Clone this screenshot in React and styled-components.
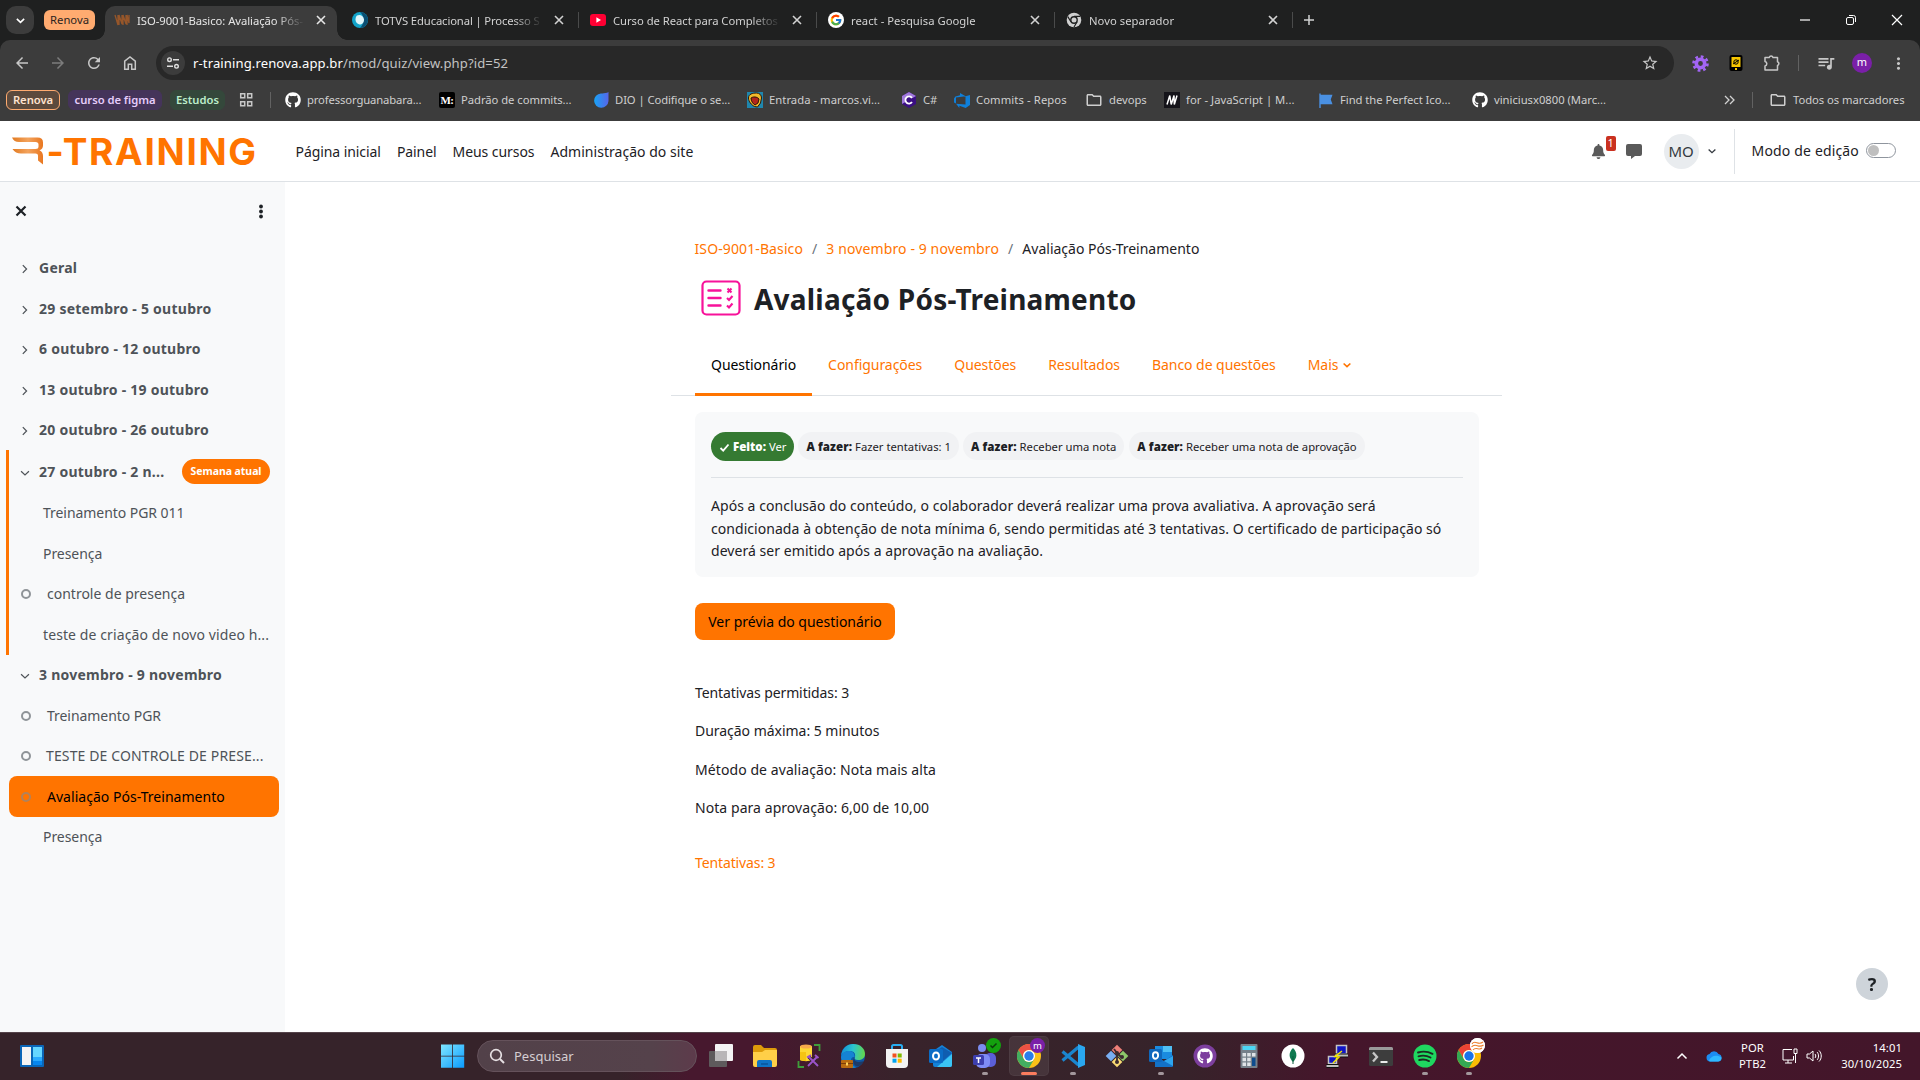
import React from "react";
import styled, { createGlobalStyle, css } from "styled-components";
import { FaGithub, FaBell } from "react-icons/fa6";
import { FcGoogle } from "react-icons/fc";
import {
  MdArrowBack, MdArrowForward, MdRefresh, MdOutlineExtension, MdStarBorder,
  MdQueueMusic, MdMoreVert, MdOutlineFolder, MdSettings,
} from "react-icons/md";

const orange = "#ff7400";
const font = `"Noto Sans", "Open Sans", sans-serif`;

const Global = createGlobalStyle`
  * { box-sizing: border-box; }
  body { margin: 0; background: #fff; font-family: ${font}; overflow: hidden; }
  svg { display: block; flex: none; }
`;

const Screen = styled.div`
  width: 1920px;
  height: 1080px;
  display: flex;
  flex-direction: column;
  overflow: hidden;
`;

const Icon = ({ w = 16, h, vb, children }) => (
  <svg width={w} height={h || w} viewBox={vb || `0 0 ${w} ${h || w}`} fill="none">
    {children}
  </svg>
);

/* ---------- browser: tab strip ---------- */

const TabStrip = styled.header`
  height: 40px;
  flex: none;
  display: flex;
  align-items: center;
  background: #1f2020;
  padding-left: 6px;
  color: #dfdfdf;
  font-size: 11.25px;
`;
const TabSearch = styled.button`
  width: 28px;
  height: 28px;
  border: 0;
  border-radius: 10px;
  padding: 0;
  background: #3c3c3c;
  display: grid;
  place-items: center;
`;
const GroupChip = styled.span`
  width: 51px;
  height: 20px;
  margin-left: 10px;
  border-radius: 6px;
  background: #ffab70;
  color: #2b2320;
  line-height: 19px;
  text-align: center;
`;
const Tabs = styled.nav`
  display: flex;
  margin-left: 7px;
`;
const Tab = styled.div`
  position: relative;
  width: 238px;
  height: 40px;
  display: flex;
  align-items: center;
  padding: 0 13px 0 11px;
  border-left: 1px solid transparent;
  border-image: ${(p) => (p.$line ? "linear-gradient(transparent 12px, #4a4b4b 12px, #4a4b4b 28px, transparent 28px) 1" : "none")};
`;
const ActiveTab = styled(Tab)`
  &::before {
    content: "";
    position: absolute;
    inset: 6px 3px 0 2px;
    border-radius: 10px 10px 0 0;
    background: #3c3c3c;
  }
  &::after {
    content: "";
    position: absolute;
    left: -8px;
    right: -7px;
    bottom: 0;
    height: 10px;
    background:
      radial-gradient(circle at 0 0, transparent 9.5px, #3c3c3c 10px) left / 10px 10px no-repeat,
      radial-gradient(circle at 100% 0, transparent 9.5px, #3c3c3c 10px) right / 10px 10px no-repeat;
  }
  > * { position: relative; z-index: 1; }
`;
const Favicon = styled.span`
  width: 16px;
  height: 16px;
  flex: none;
  display: grid;
  place-items: center;
`;
const TabTitle = styled.span`
  flex: 1;
  margin: 1px 10px 0 7px;
  white-space: nowrap;
  letter-spacing: ${(p) => p.$ls || 0}px;
  line-height: 20px;
  color: ${(p) => (p.$active ? "#e6e6e6" : "#d2d2d2")};
  mask-image: linear-gradient(90deg, #000 calc(100% - 30px), transparent);
`;
const NewTab = styled.span`
  height: 16px;
  padding-left: 10px;
  border-left: 1px solid #4a4b4b;
  display: flex;
  align-items: center;
`;
const WindowButtons = styled.div`
  margin-left: auto;
  display: flex;
  gap: 34px;
  padding-right: 17px;
`;

const Cross = ({ s = 12, c = "#d2d2d2", sw = 1.6, e = 2 }) => (
  <Icon w={s}><path d={`M${e} ${e}L${s - e} ${s - e}M${s - e} ${e}L${e} ${s - e}`} stroke={c} strokeWidth={sw} /></Icon>
);

const VmmIcon = () => (
  <Icon><path d="M1 3l3 10V3M5 13V3l3 9V3M9 13V3l3 9V3M13 13V3l2 8V3" stroke="#96562a" strokeWidth="1.3" /></Icon>
);
const TotvsIcon = () => (
  <Icon>
    <circle cx="8" cy="8" r="8" fill="#12a3c9" />
    <path d="M8 0a8 8 0 0 1 0 16c4-3 5-12 0-16z" fill="#0a4f73" />
    <path d="M5 3.500c3-1.500 6.500 0 7 4 .2 3-2 5-4.500 5C5 12 3.500 10 3.500 7.500c0-2 .5-3 1.500-4z" fill="#dff6fb" />
  </Icon>
);
const YoutubeIcon = () => (
  <Icon><rect y="2" width="16" height="12" rx="3" fill="#ff0033" /><path d="M6.4 5.3v5.4L11 8z" fill="#fff" /></Icon>
);
const GoogleIcon = () => (
  <Icon>
    <circle cx="8" cy="8" r="8" fill="#fff" />
    <g transform="translate(1.6 1.6)"><FcGoogle size={12.8} /></g>
  </Icon>
);
const ChromeGreyIcon = () => (
  <Icon>
    <circle cx="8" cy="8" r="7.300" fill="#d0d0d0" />
    <circle cx="8" cy="8" r="3.9" fill="#1f2020" />
    <circle cx="8" cy="8" r="2.5" fill="#d0d0d0" />
    <path d="M8 4.4h6.2M4.9 9.8L1.8 4.6M11.1 9.8L8 15" stroke="#1f2020" strokeWidth="1.2" />
  </Icon>
);

/* ---------- browser: toolbar ---------- */

const Toolbar = styled.div`
  height: 46px;
  flex: none;
  display: flex;
  align-items: center;
  background: #1f2020;
`;
const ToolbarInner = styled.div`
  width: 100%;
  height: 46px;
  display: flex;
  align-items: center;
  padding: 0 13px;
  background: #3c3c3c;
  border-radius: 10px 10px 0 0;
  color: #c7c7c7;
`;
const NavButtons = styled.div`
  display: flex;
  gap: 18px;
  width: 143px;
`;
const AddressBar = styled.div`
  width: 1518px;
  height: 34px;
  border-radius: 17px;
  background: #282828;
  display: flex;
  align-items: center;
  padding: 0 15px 0 5px;
`;
const SiteInfo = styled.span`
  width: 24px;
  height: 24px;
  border-radius: 50%;
  background: #3c3c3c;
  display: grid;
  place-items: center;
`;
const Url = styled.span`
  flex: 1;
  margin-left: 8px;
  font-size: 13.1px;
  letter-spacing: 0.1px;
  line-height: 20px;
  color: #c2c2c2;
  b { font-weight: 400; color: #fff; }
`;
const Extensions = styled.div`
  display: flex;
  align-items: center;
  margin-left: 17px;
`;
const Slot = styled.span`
  width: ${(p) => p.$w}px;
  display: flex;
  justify-content: center;
`;
const Rule = styled.span`
  width: 1px;
  height: 16px;
  flex: none;
  margin: ${(p) => p.$m || "0"};
  background: #626262;
`;
const Profile = styled.span`
  width: 20px;
  height: 20px;
  border-radius: 50%;
  background: #7a1fa8;
  color: #fff;
  font-size: 11px;
  line-height: 18px;
  text-align: center;
`;

/* ---------- browser: bookmarks ---------- */

const Bookmarks = styled.div`
  height: 35px;
  flex: none;
  display: flex;
  align-items: center;
  padding: 0 0 7px 6px;
  background: #3c3c3c;
  font-size: 11.25px;
  letter-spacing: -0.04px;
  color: #cfcfcf;
  white-space: nowrap;
`;
const Group = styled.span`
  width: ${(p) => p.$w}px;
  height: 20px;
  margin-right: 8px;
  border-radius: 6px;
  border: 1px solid ${(p) => p.$border || p.$bg};
  background: ${(p) => p.$bg};
  color: ${(p) => p.$fg};
  font-weight: 600;
  line-height: 17px;
  text-align: center;
`;
const Bookmark = styled.span`
  width: ${(p) => p.$w}px;
  flex: none;
  display: flex;
  align-items: center;
  gap: 6px;
  line-height: 18px;
  letter-spacing: ${(p) => p.$ls ?? -0.04}px;
`;

const MediumIcon = styled.span`
  width: 16px;
  height: 16px;
  border-radius: 2px;
  background: #000;
  color: #fff;
  font: 700 11px/16px "Liberation Serif", serif;
  letter-spacing: -0.6px;
  text-align: center;
  overflow: hidden;
`;
const MdnIcon = () => (
  <Icon><rect width="16" height="16" fill="#15141a" /><path d="M3 12.500L5.800 3.500l1.400 9L10 3.500l.300 9L13 3.500" stroke="#fff" strokeWidth="1.500" /></Icon>
);
const DioIcon = () => (
  <Icon>
    <defs><linearGradient id="dio" x1="0" x2="1"><stop stopColor="#18a3f5" /><stop offset="1" stopColor="#5765e8" /></linearGradient></defs>
    <path d="M15.5 0v9a7.2 7.2 0 1 1-7.6-7.6c2.8.2 5.500-.2 7.6-1.400z" fill="url(#dio)" />
  </Icon>
);
const EntradaIcon = () => (
  <Icon>
    <rect width="16" height="16" fill="#1f86ad" />
    <path d="M1.500 6c0-4 4-5 8-5 3 0 5 2 5 5l-1 5-3 4-3-.500c-3-1.500-6-5-6-8.500z" fill="#f2bb2b" stroke="#2a1408" />
    <path d="M4 6c2-1.500 6-1.500 8 1l-1 4-3 2c-2-1-4-4-4-7z" fill="#b3261b" stroke="#2a1408" />
  </Icon>
);
const CsharpIcon = () => (
  <Icon>
    <path d="M8 0l7 4v8l-7 4-7-4V4z" fill="#3b0f83" />
    <path d="M8 0l7 4-14 8V4z" fill="#a179dc" />
    <circle cx="8" cy="8" r="4.200" fill="#3b0f83" />
    <path d="M11 6a3.600 3.600 0 1 0 0 4" stroke="#fff" strokeWidth="1.800" />
  </Icon>
);
const DevopsIcon = () => (
  <Icon><path d="M16 3v10l-4.300 3-6.300-2.200V16L2 11.700l9.500.700V4.200zM11.700 4.200L6 1v2.200L1.400 4.600 0 6.400v4.200l2 .900V5.500z" fill="#0f7fd9" /></Icon>
);
const FlagIcon = () => (
  <Icon><path d="M2 1.500v14.500M2.500 3.500h11l-1.500 4 1.500 4H2.500z" fill="#4a90e2" stroke="#4a90e2" strokeWidth="1.400" /></Icon>
);

/* ---------- page: top navigation ---------- */

const SiteNav = styled.header`
  height: 61px;
  flex: none;
  display: flex;
  align-items: center;
  padding: 0 24px 0 12px;
  border-bottom: 1px solid #dee2e6;
  background: #fff;
  font-size: 14px;
  color: #1d2125;
`;
const Logo = styled.div`
  width: 283.5px;
  display: flex;
  align-items: center;
  color: ${orange};
  font: 700 37px/40px Inter, sans-serif;
  letter-spacing: 1.7px;
  white-space: nowrap;
  padding-top: 2px;
  span { margin-left: 2.5px; }
  svg { position: relative; top: -1px; }
`;
const NavLinks = styled.nav`
  display: flex;
  gap: 16px;
  padding-top: 2px;
  line-height: 22px;
  span:nth-child(-n + 3) { letter-spacing: -0.07px; }
  span { letter-spacing: 0.03px; }
`;
const UserTools = styled.div`
  margin-left: auto;
  display: flex;
  align-items: center;
  height: 60px;
`;
const Bell = styled.span`
  position: relative;
  width: 35px;
  color: #5a5a5a;
`;
const Count = styled.b`
  position: absolute;
  left: 15px;
  top: -8px;
  width: 10px;
  height: 15px;
  border-radius: 2px;
  background: #ca3120;
  color: #fff;
  font-weight: 400;
  font-size: 11px;
  line-height: 14px;
  text-align: center;
`;
const Avatar = styled.span`
  width: 35px;
  height: 35px;
  margin: 0 7px 0 22px;
  border-radius: 50%;
  background: #e9ecef;
  color: #343a40;
  font-size: 15px;
  line-height: 34px;
  text-align: center;
`;
const EditMode = styled.label`
  height: 45px;
  margin-left: 16px;
  padding-left: 17px;
  border-left: 1px solid #dee2e6;
  display: flex;
  align-items: center;
  gap: 7px;
  letter-spacing: 0.16px;
  line-height: 22px;
`;
const Switch = styled.span`
  width: 30px;
  height: 15px;
  margin-top: -1px;
  border: 1px solid #8f959e;
  border-radius: 8px;
  padding: 1px;
  &::before {
    content: "";
    display: block;
    width: 11px;
    height: 11px;
    border-radius: 50%;
    background: #bfbfbf;
  }
`;

/* ---------- page: course index ---------- */

const Page = styled.div`
  flex: 1;
  display: flex;
  min-height: 0;
  background: #fff;
`;
const Drawer = styled.aside`
  width: 285px;
  flex: none;
  background: #f8f9fa;
  color: #4e5358;
  font-size: 14px;
`;
const DrawerHead = styled.div`
  height: 65.5px;
  padding: 22px 19px 0 14px;
  display: flex;
  justify-content: space-between;
  align-items: flex-start;
`;
const Week = styled.section`
  border-left: 3px solid ${(p) => (p.$current ? orange : "transparent")};
  margin-left: 6px;
`;
const WeekHead = styled.div`
  height: ${(p) => (p.$tall ? 42.5 : 40.5)}px;
  display: flex;
  align-items: center;
  padding: 0.6px 15px 0 9px;
  font-weight: 700;
  letter-spacing: 0.25px;
  line-height: 22px;
  white-space: nowrap;
  svg { margin-right: 7px; position: relative; top: 1px; }
`;
const WeekBadge = styled.span`
  width: 88px;
  height: 25px;
  flex: none;
  margin-left: auto;
  border-radius: 13px;
  background: ${orange};
  color: #fff;
  font-size: 10.5px;
  letter-spacing: -0.05px;
  line-height: 24px;
  text-align: center;
`;
const Activity = styled.a`
  height: 40.5px;
  width: 270px;
  display: flex;
  align-items: center;
  padding: 1.4px 0 0 ${(p) => p.$pad ?? 34}px;
  letter-spacing: ${(p) => p.$ls ?? 0}px;
  line-height: 22px;
  white-space: nowrap;
  ${(p) => p.$on && css`
    background: ${orange};
    color: #000;
    border-radius: 8px;
  `}
`;
const Ring = styled.i`
  width: 10px;
  height: 10px;
  flex: none;
  margin-right: ${(p) => p.$gap || 16}px;
  border: 2px solid ${(p) => (p.$on ? "#b0825c" : "#8f9498")};
  border-radius: 50%;
`;

const chevrons = {
  right: "M5.500 3.500l4.300 4.500-4.300 4.500",
  down: "M3.500 6l4.500 4.200L12.500 6",
};
const Chevron = ({ dir = "right", size = 14, c = "#4e5358", sw = 1.4 }) => (
  <Icon w={size} vb="0 0 16 16"><path d={chevrons[dir]} stroke={c} strokeWidth={sw} /></Icon>
);

/* ---------- page: main ---------- */

const Main = styled.main`
  flex: 1;
  padding: 0 0 0 386px;
  font-size: 14px;
  color: #1d2125;
`;
const Column = styled.div`
  width: 832px;
  padding: 56px 24px 0;
`;
const Crumbs = styled.div`
  display: flex;
  gap: 9px;
  height: 22px;
  line-height: 22px;
  margin-left: -0.5px;
  letter-spacing: 0.11px;
  a { color: ${orange}; }
  i { font-style: normal; color: #6a737b; }
  span { letter-spacing: 0; }
`;
const Heading = styled.div`
  display: flex;
  align-items: center;
  gap: 13px;
  height: 50px;
  margin: 13px 0 0 5px;
  h1 { margin: 1px 0 0 -1px; font-size: 28px; letter-spacing: 0.22px; line-height: 40px; color: #1d2125; }
`;
const TabBar = styled.nav`
  display: flex;
  height: 64px;
  margin: 9px -23px 0 -24px;
  padding: 0 24px;
  border-bottom: 1px solid #dee2e6;
`;
const PageTab = styled.a`
  height: 64px;
  display: flex;
  align-items: center;
  gap: 3px;
  padding: 5px 16px 0;
  line-height: 22px;
  letter-spacing: -0.05px;
  white-space: nowrap;
  color: ${(p) => (p.$on ? "#000" : orange)};
  border-bottom: 3px solid ${(p) => (p.$on ? orange : "transparent")};
`;
const Card = styled.section`
  width: 784px;
  height: 165px;
  margin-top: 16px;
  padding: 20px 16px;
  border-radius: 8px;
  background: #f8f9fa;
`;
const Conditions = styled.div`
  display: flex;
  gap: 4px;
  height: 46px;
  border-bottom: 1px solid #dee2e6;
`;
const Pill = styled.span`
  display: flex;
  align-items: center;
  height: ${(p) => (p.$done ? 29 : 28)}px;
  margin-left: ${(p) => p.$ml || 0}px;
  padding: 0 8px;
  border-radius: 15px;
  font-size: 11.25px;
  white-space: pre;
  background: ${(p) => (p.$done ? "#357a32" : "#f1f2f4")};
  color: ${(p) => (p.$done ? "#fff" : "#1d2125")};
  b { font-size: 11.5px; font-weight: 900; letter-spacing: ${(p) => (p.$done ? 0 : 0.1)}px; }
  svg { margin-right: 3px; position: relative; top: 1px; }
`;
const Description = styled.p`
  margin: 17px 0 0;
  line-height: 22.5px;
  letter-spacing: 0.05px;
  white-space: nowrap;
`;
const Primary = styled.button`
  display: block;
  width: 200px;
  height: 37px;
  margin: 26px 0 42px;
  padding: 0;
  border: 0;
  border-radius: 8px;
  background: ${orange};
  color: #000;
  font: 14px/35px ${font};
`;
const Fact = styled.p`
  margin: 0 0 16px;
  line-height: 22.3px;
  letter-spacing: ${(p) => p.$ls || 0}px;
  ${(p) => p.$link && css`color: ${orange}; margin-top: 33px;`}
`;
const Help = styled.button`
  position: fixed;
  right: 32px;
  bottom: 80px;
  width: 32px;
  height: 32px;
  border: 0;
  padding: 0;
  border-radius: 50%;
  background: #ced4da;
  color: #1d2125;
  font: 700 18px/32px ${font};
`;

/* ---------- taskbar ---------- */

const Taskbar = styled.footer`
  height: 48px;
  flex: none;
  display: flex;
  align-items: center;
  box-shadow: inset 0 1px 0 #55434a;
  padding: 0 18px 0 20px;
  background: linear-gradient(90deg, #36232a 0, #36232a 620px, #47182e 690px, #47182e 760px, #38232b 900px, #36232a 1180px, #45162b 1330px, #43162a 100%);
  color: #fff;
`;
const Search = styled.div`
  width: 220px;
  height: 32px;
  margin: 0 2px 0 12px;
  border: 1px solid #65525b;
  border-radius: 16px;
  background: linear-gradient(90deg, #524149, #55424b 80%, #5d3b4b);
  display: flex;
  align-items: center;
  gap: 9px;
  padding: 0 0 1px 11px;
  font-size: 13px;
  line-height: 20px;
  color: #d5ced2;
`;
const StartArea = styled.div`
  margin-left: 397px;
  display: flex;
  align-items: center;
`;
const App48 = styled.span`
  width: 44px;
  height: 48px;
  display: flex;
  flex-direction: column;
  align-items: center;
  position: relative;
  padding-top: 12px;
`;
const ActiveApp = styled(App48)`
  &::before {
    content: "";
    position: absolute;
    inset: 4px 2px 4px 2px;
    border-radius: 5px;
    background: rgba(255, 255, 255, 0.08);
    border: 1px solid rgba(255, 255, 255, 0.04);
  }
`;
const Running = styled.i`
  position: absolute;
  bottom: 5px;
  width: ${(p) => (p.$on ? 16 : 6)}px;
  height: 3px;
  border-radius: 2px;
  background: ${(p) => (p.$on ? "#fb7c5e" : "#a3979c")};
`;
const AppBadge = styled.span`
  position: absolute;
  left: 23px;
  top: 6px;
  width: 15px;
  height: 15px;
  border-radius: 50%;
  background: ${(p) => p.$bg};
  color: #fff;
  font-size: 9.5px;
  line-height: 13px;
  display: flex;
  justify-content: center;
  align-items: center;
`;
const Tray = styled.div`
  margin-left: auto;
  display: flex;
  align-items: center;
  font-size: 11.25px;
  line-height: 16px;
`;
const TwoLines = styled.div`
  width: ${(p) => p.$w}px;
  text-align: ${(p) => p.$align};
  padding-bottom: 1px;
  letter-spacing: 0.1px;
`;

const I24 = (p) => <Icon w={24} {...p} />;

const WidgetIcon = () => (
  <I24>
    <rect y="1" width="24" height="22" rx="1" fill="#0a66b8" />
    <rect x="2" y="3" width="9" height="18" fill="#f4f4f4" />
    <rect x="13" y="3" width="9" height="10" fill="#66d6ff" />
    <rect x="13" y="13" width="9" height="4" fill="#2aaaff" />
    <rect x="13" y="17" width="9" height="4" fill="#0786ef" />
  </I24>
);
const StartIcon = () => (
  <I24>
    <defs><linearGradient id="win" x1="0" y1="0" x2="1" y2="1"><stop stopColor="#7fe6ff" /><stop offset="1" stopColor="#0a9bff" /></linearGradient></defs>
    <path d="M0 .500h11.200v11.200H0zM12 .500h11.200v11.200H12zM0 12.500h11.200v11.200H0zM12 12.500h11.200v11.200H12z" fill="url(#win)" />
  </I24>
);
const TaskViewIcon = () => (
  <I24>
    <rect x="6" y="0" width="18" height="17" rx="1" fill="#f4f3f4" />
    <rect x="0" y="7" width="18" height="16" rx="1" fill="#5e5a5c" />
    <rect x="6" y="7" width="12" height="10" fill="#b9b6b8" />
  </I24>
);
const ExplorerIcon = () => (
  <I24>
    <path d="M0 3a2 2 0 0 1 2-2h6l3 3h11a2 2 0 0 1 2 2v4H0z" fill="#dd9b0a" />
    <path d="M0 8h9l3-2h12v15a2 2 0 0 1-2 2H2a2 2 0 0 1-2-2z" fill="#ffcf48" />
    <path d="M4 23v-5a2 2 0 0 1 2-2h11a2 2 0 0 1 2 2v5z" fill="#0f74c6" />
    <path d="M8 20h7" stroke="#0a559b" strokeWidth="1.500" />
  </I24>
);
const SsmsIcon = () => (
  <I24>
    <path d="M3 2h12v14c-2 1.500-10 1.500-12 0z" fill="#fdd835" />
    <path d="M3 8h6v9c-3 0-5-.500-6-1z" fill="#f5c413" />
    <ellipse cx="9" cy="2.500" rx="6" ry="2" fill="#f7a94a" />
    <path d="M17 1h5.500v6M1.500 17v6H7" stroke="#3f9e3a" strokeWidth="1.800" />
    <path d="M11 22l9-9M12 13l9 9" stroke="#36232a" strokeWidth="3.500" />
    <path d="M11 22l9-9M12 13l9 9M10 13.500l4-2.500M18 11l3.500 3" stroke="#9c52c9" strokeWidth="1.900" />
  </I24>
);
const EdgeIcon = () => (
  <I24>
    <defs><linearGradient id="edge" x1="0" y1=".3" x2="1" y2=".4"><stop stopColor="#128fd8" /><stop offset=".5" stopColor="#2bc4cf" /><stop offset="1" stopColor="#63d64c" /></linearGradient></defs>
    <circle cx="12" cy="12" r="12" fill="#0d57a4" />
    <path d="M0 12C1 4 6 0 12 0c8 0 12 5 12 10 0 4-3 6-7 6-3 0-4-1-3-3 1-4-2-6-5-6-4 0-8 2-9 5z" fill="url(#edge)" />
    <path d="M0 13c1-4 4-6 8-6 3 0 6 2 5.500 6C9 12 8 20 15 23.500 7 26 0 20 0 13z" fill="#1583d3" />
    <path d="M13.500 13c-1 3 1 5 5 5 2 0 4-1 4.500-1-1 3-4 5-6.500 5.500-4-1-5.500-5-3-9.500z" fill="#2e1e2b" opacity=".5" />
    <rect y="16" width="12" height="8" rx="1" fill="#b96a10" />
    <path d="M0 19.500h12" stroke="#7c3f08" />
    <rect x="5" y="18.500" width="2" height="3" fill="#ffd15a" />
  </I24>
);
const StoreIcon = () => (
  <I24>
    <path d="M7 6V2.500A1.500 1.500 0 0 1 8.500 1h7A1.500 1.500 0 0 1 17 2.500V6" stroke="#28aef2" strokeWidth="2" />
    <path d="M1 5h22v15a4 4 0 0 1-4 4H5a4 4 0 0 1-4-4z" fill="#f3f3f3" />
    <path d="M7.500 9.500h4v4h-4z" fill="#f25022" /><path d="M12.700 9.500h4v4h-4z" fill="#7fba00" />
    <path d="M7.500 14.700h4v4h-4z" fill="#00a4ef" /><path d="M12.700 14.700h4v4h-4z" fill="#ffb900" />
  </I24>
);
const OutlookNewIcon = () => (
  <I24>
    <path d="M4 7l9-6 10 7v13a2 2 0 0 1-2 2H6a2 2 0 0 1-2-2z" fill="#1482d8" />
    <path d="M7 7l6-4 10 6-9 8-7-4z" fill="#0f5db0" />
    <path d="M23 10v11a2 2 0 0 1-2 2H8z" fill="#3bc5f5" />
    <rect x="0" y="5" width="14" height="14" rx="1.500" fill="#0b6cc6" />
    <ellipse cx="7" cy="12" rx="3" ry="3.500" stroke="#fff" strokeWidth="2" />
  </I24>
);
const OutlookIcon = () => (
  <I24>
    <path d="M6 2h16a1 1 0 0 1 1 1v12H6z" fill="#1a8be0" />
    <path d="M14 2h9v6h-9z" fill="#4fc0f5" />
    <path d="M6 12l9 5 9-6v11a1 1 0 0 1-1 1H6z" fill="#1372c7" />
    <path d="M15 17l9-5v10z" fill="#2da5ee" />
    <rect y="5" width="13" height="13" rx="1.500" fill="#0f68bd" />
    <ellipse cx="6.500" cy="11.500" rx="2.600" ry="3.200" stroke="#fff" strokeWidth="1.900" />
  </I24>
);
const TeamsIcon = () => (
  <I24>
    <circle cx="9" cy="4" r="4" fill="#7b8df0" />
    <rect x="12" y="9" width="11" height="14" rx="5" fill="#5b5fd8" />
    <rect x="3" y="10" width="14" height="14" rx="5" fill="#7f8cf5" />
    <rect x="0" y="11" width="11" height="10" rx="1.500" fill="#3d3fae" />
    <path d="M3 14h5M5.500 14v5" stroke="#fff" strokeWidth="1.500" />
  </I24>
);
const ChromeIcon = () => (
  <I24>
    <circle cx="12" cy="12" r="12" fill="#fbbc05" />
    <path d="M1.600 6A12 12 0 0 1 22.400 6H12a6 6 0 0 0-5.200 9z" fill="#ea4335" />
    <path d="M1.600 6A12 12 0 0 0 12 24l5.200-9a6 6 0 0 1-10.400 0z" fill="#34a853" />
    <circle cx="12" cy="12" r="6" fill="#fff" />
    <circle cx="12" cy="12" r="4.700" fill="#1a73e8" />
  </I24>
);
const CodeIcon = () => (
  <I24>
    <path d="M1.500 7.500L17.500 21M1.500 16.500L17.500 3" stroke="#1a86cf" strokeWidth="3.200" />
    <path d="M17 0l7 3v18l-7 3z" fill="#2aa7f0" />
  </I24>
);
const GitIcon = () => (
  <I24>
    <g transform="rotate(45 12 12)">
      <rect x="4" y="4" width="7.500" height="7.500" fill="#ef7f78" />
      <rect x="12.500" y="4" width="7.500" height="7.500" fill="#8dc96a" />
      <rect x="4" y="12.500" width="7.500" height="7.500" fill="#79aef2" />
      <rect x="12.500" y="12.500" width="7.500" height="7.500" fill="#fbdb74" />
    </g>
    <path d="M9 5l3 4v9M12 9l4 4" stroke="#3b2b30" strokeWidth="1.800" />
    <circle cx="12" cy="9" r="2" fill="#3b2b30" /><circle cx="12" cy="18" r="2" fill="#3b2b30" /><circle cx="17" cy="13" r="2" fill="#3b2b30" />
  </I24>
);
const GithubDesktopIcon = () => (
  <I24>
    <circle cx="12" cy="12" r="11.500" fill="#7d3f9e" />
    <g transform="translate(4 4)"><FaGithub size={16} color="#fff" /></g>
  </I24>
);
const CalculatorIcon = () => (
  <I24>
    <rect x="3.500" width="17" height="24" rx="1" fill="#75808a" />
    <rect x="5.500" y="2" width="13" height="4" fill="#4cd6f5" />
    <path d="M5.500 9h3.500v3.500H5.500zM10.200 9h3.500v3.500h-3.500zM15 9h3.500v3.500H15zM5.500 13.700h3.500v3.500H5.500zM10.200 13.700h3.500v3.500h-3.500zM5.500 18.500h3.500V22H5.500zM10.200 18.500h3.500V22h-3.500z" fill="#dfe3e7" />
    <rect x="15" y="13.700" width="3.500" height="8.300" fill="#0e4c8e" />
  </I24>
);
const MongoIcon = () => (
  <I24>
    <circle cx="12" cy="12" r="11.500" fill="#fff" />
    <path d="M12 4c5 5 4 10 0 14-4-4-5-9 0-14z" fill="#0f7a50" />
    <path d="M12 12v8" stroke="#0b5c3c" />
  </I24>
);
const PuttyIcon = () => (
  <I24>
    <rect x="11.500" y="1.500" width="10" height="8.500" fill="#1016c4" stroke="#c4c4c4" strokeWidth="1.500" />
    <rect x="3.500" y="12.500" width="8" height="7" fill="#1016c4" stroke="#c4c4c4" strokeWidth="1.500" />
    <path d="M10 11.500h13M1.500 22h12" stroke="#111" strokeWidth="4" />
    <path d="M10 11.500h13M1.500 22h12" stroke="#bdbdbd" strokeWidth="2.200" />
    <path d="M17 7l-7 5.500 4 .500-6 6" stroke="#f4e800" strokeWidth="1.500" />
  </I24>
);
const TerminalIcon = () => (
  <I24>
    <rect y="3" width="24" height="19" rx="1.500" fill="#3d3d3d" />
    <path d="M0 6V4.500A1.500 1.500 0 0 1 1.500 3h21A1.500 1.500 0 0 1 24 4.500V6z" fill="#9a9a9a" />
    <path d="M4 8.500l4 4.500-4 4.500" stroke="#c6c6c6" strokeWidth="2.300" />
    <path d="M11.500 18h7" stroke="#fff" strokeWidth="1.800" />
  </I24>
);
const SpotifyIcon = () => (
  <I24>
    <circle cx="12" cy="12" r="11.500" fill="#1fd760" />
    <path d="M5 8.500c5-1.500 10-1 14.500 1.300M5.500 12.300c4-1.100 8.500-.700 12 1.200M6.200 16c3.500-.800 7-.500 9.800 1.100" stroke="#1c2b22" strokeWidth="1.900" strokeLinecap="round" />
  </I24>
);
const WaveBadge = () => (
  <Icon w={15}>
    <circle cx="7.500" cy="7.500" r="7.500" fill="#fff" />
    <path d="M2 6c3-5 6 2 11-2M1.500 9c4-5 7 2 12-2M3 12c3-4 6 1 9-2" stroke="#ee7d2b" strokeWidth="1.100" />
  </Icon>
);
const BrandMark = () => (
  <Icon w={32} h={28}>
    <defs>
      <linearGradient id="mark" gradientUnits="userSpaceOnUse" x1="0" y1="0" x2="32" y2="0">
        <stop stopColor="#e27a20" /><stop offset=".5" stopColor="#f3a35d" /><stop offset="1" stopColor="#e8741c" />
      </linearGradient>
    </defs>
    <path d="M0 .500H25.500Q31 .500 31 5.500v3Q31 12 27.500 13.200 31 15 31 19v8.500l-5-4V18.500Q26 16.500 23.500 16.500H9Q3.500 16.500.500 12H23.500Q26.500 12 26.500 9.500V7.500Q26.500 5 23.500 5H7Q2 5 0 .500z" fill="url(#mark)" />
  </Icon>
);

const bookmarks = [
  ["professorguanabara...", 154, <FaGithub size={16} color="#fff" />, -0.12],
  ["Padrão de commits...", 154, <MediumIcon>M:</MediumIcon>],
  ["DIO | Codifique o se...", 154, <DioIcon />, -0.08],
  ["Entrada - marcos.vi...", 154, <EntradaIcon />, 0.04],
  ["C#", 53, <CsharpIcon />],
  ["Commits - Repos", 131, <DevopsIcon />, 0.1],
  ["devops", 79, <MdOutlineFolder size={18} />],
  ["for - JavaScript | M...", 154, <MdnIcon />, 0.04],
  ["Find the Perfect Ico...", 154, <FlagIcon />],
  ["viniciusx0800 (Marc...", 250, <FaGithub size={16} color="#fff" />, -0.02],
];

const tabs = [
  ["TOTVS Educacional | Processo S", -0.12, <TotvsIcon />],
  ["Curso de React para Completos", -0.03, <YoutubeIcon />, true],
  ["react - Pesquisa Google", 0.03, <GoogleIcon />, true],
  ["Novo separador", 0.03, <ChromeGreyIcon />, true],
];

const apps = [
  { icon: <TaskViewIcon /> },
  { icon: <ExplorerIcon /> },
  { icon: <SsmsIcon /> },
  { icon: <EdgeIcon /> },
  { icon: <StoreIcon /> },
  { icon: <OutlookNewIcon /> },
  { icon: <TeamsIcon />, run: true, badge: <AppBadge $bg="#13a10e"><Icon w={9}><path d="M1.500 4.500l2 2 4-4" stroke="#0b3d0a" strokeWidth="1.500" /></Icon></AppBadge> },
  { icon: <ChromeIcon />, run: true, active: true, badge: <AppBadge $bg="#7a1fa8">m</AppBadge> },
  { icon: <CodeIcon />, run: true },
  { icon: <GitIcon /> },
  { icon: <OutlookIcon />, run: true },
  { icon: <GithubDesktopIcon /> },
  { icon: <CalculatorIcon /> },
  { icon: <MongoIcon /> },
  { icon: <PuttyIcon /> },
  { icon: <TerminalIcon /> },
  { icon: <SpotifyIcon />, run: true },
  { icon: <ChromeIcon />, run: true, badge: <AppBadge $bg="#fff"><WaveBadge /></AppBadge> },
];

const pastWeeks = ["Geral", "29 setembro - 5 outubro", "6 outubro - 12 outubro", "13 outubro - 19 outubro", "20 outubro - 26 outubro"];

const Browser = () => (
  <>
    <TabStrip>
      <TabSearch><Chevron dir="down" c="#fff" sw={2} size={13} /></TabSearch>
      <GroupChip>Renova</GroupChip>
      <Tabs>
        <ActiveTab>
          <Favicon><VmmIcon /></Favicon>
          <TabTitle $active $ls={-0.04}>ISO-9001-Basico: Avaliação Pós-</TabTitle>
          <Cross c="#e6e6e6" />
        </ActiveTab>
        {tabs.map(([title, ls, icon, line]) => (
          <Tab key={title} $line={line}>
            <Favicon>{icon}</Favicon>
            <TabTitle $ls={ls}>{title}</TabTitle>
            <Cross />
          </Tab>
        ))}
      </Tabs>
      <NewTab><Icon w={12}><path d="M6 1v10M1 6h10" stroke="#d2d2d2" strokeWidth="1.500" /></Icon></NewTab>
      <WindowButtons>
        <Icon w={12}><path d="M1 6h10" stroke="#fff" strokeWidth="1.200" /></Icon>
        <Icon w={12}><rect x="1.500" y="3.500" width="7" height="7" rx="1.500" stroke="#fff" /><path d="M4 1.500h4.500a2 2 0 0 1 2 2V8" stroke="#fff" /></Icon>
        <Cross c="#fff" sw={1.2} e={1} />
      </WindowButtons>
    </TabStrip>
    <Toolbar>
      <ToolbarInner>
        <NavButtons>
          <MdArrowBack size={18} />
          <MdArrowForward size={18} color="#7c7c7c" />
          <MdRefresh size={18} />
          <Icon w={18}><path d="M3.700 7.200L9 3l5.300 4.200v8.100h-3.600v-5H7.300v5H3.700z" stroke="#c7c7c7" strokeWidth="1.500" /></Icon>
        </NavButtons>
        <AddressBar>
          <SiteInfo>
            <Icon w={14}><circle cx="3.500" cy="3.700" r="1.800" stroke="#e0e0e0" strokeWidth="1.400" /><circle cx="10.500" cy="10.300" r="1.800" stroke="#e0e0e0" strokeWidth="1.400" /><path d="M7 3.700h6M1 10.300h6" stroke="#e0e0e0" strokeWidth="1.500" /></Icon>
          </SiteInfo>
          <Url><b>r-training.renova.app.br</b>/mod/quiz/view.php?id=52</Url>
          <MdStarBorder size={18} />
        </AddressBar>
        <Extensions>
          <Slot $w={18}>
            <Icon w={17} vb="0 0 17 17">
              <circle cx="8.500" cy="8.500" r="4.200" stroke="#a365f5" strokeWidth="3.600" />
              <circle cx="8.500" cy="8.500" r="7" stroke="#a365f5" strokeWidth="2.600" strokeDasharray="2.750 2.750" />
            </Icon>
          </Slot>
          <Slot $w={54}><Icon w={14} h={16}><rect x=".5" width="13" height="16" rx="2" fill="#000" /><rect x="2.500" y="2" width="9" height="10" fill="#f7c600" /><circle cx="7" cy="7" r="2.200" stroke="#000" /><path d="M4 9l6-4" stroke="#000" /><rect x="6" y="13" width="2" height="2" fill="#f7c600" /></Icon></Slot>
          <Slot $w={18}>
            <Icon w={18}><path d="M2 3.500h4.200a2 2 0 0 1 3.800 0h4.500v4.200a2 2 0 0 1 0 3.800v4.500H2v-4a2.300 2.300 0 0 0 0-4.500z" stroke="#c7c7c7" strokeWidth="1.500" strokeLinejoin="round" /></Icon>
          </Slot>
          <Rule $m="0 17px 0 17px" />
          <Slot $w={19}><MdQueueMusic size={20} /></Slot>
          <Slot $w={54}><Profile>m</Profile></Slot>
          <Slot $w={18}><MdMoreVert size={19} /></Slot>
        </Extensions>
      </ToolbarInner>
    </Toolbar>
    <Bookmarks>
      <Group $w={54} $bg="#5c4a3d" $border="#ffab70" $fg="#ffe3cf">Renova</Group>
      <Group $w={94} $bg="#45345a" $fg="#e6cdfb">curso de figma</Group>
      <Group $w={55} $bg="#34483b" $fg="#bdeecb">Estudos</Group>
      <Icon w={20}><path d="M7.700 3.700h4v4h-4zM14.700 3.700h4v4h-4zM7.700 11.700h4v4h-4zM14.700 11.700h4v4h-4z" stroke="#c7c7c7" strokeWidth="1.500" /></Icon>
      <Rule $m="0 14px 0 17px" />
      {bookmarks.map(([name, w, icon, ls]) => <Bookmark key={name} $w={w} $ls={ls}>{icon}{name}</Bookmark>)}
      <Icon w={14}><path d="M3 3l4 4-4 4M8 3l4 4-4 4" stroke="#d2d2d2" strokeWidth="1.300" /></Icon>
      <Rule $m="0 16px 0 16px" />
      <Bookmark $w={140}><MdOutlineFolder size={18} />Todos os marcadores</Bookmark>
    </Bookmarks>
  </>
);

const Index = () => (
  <Drawer>
    <DrawerHead>
      <Icon w={14}><path d="M2.500 2.500l9 9M11.500 2.500l-9 9" stroke="#1d2125" strokeWidth="2.200" /></Icon>
      <Icon w={10} h={15}><circle cx="5" cy="2.500" r="1.900" fill="#1d2125" /><circle cx="5" cy="7.500" r="1.900" fill="#1d2125" /><circle cx="5" cy="12.500" r="1.900" fill="#1d2125" /></Icon>
    </DrawerHead>
    {pastWeeks.map((w) => <Week key={w}><WeekHead><Chevron />{w}</WeekHead></Week>)}
    <Week $current>
      <WeekHead $tall><Chevron dir="down" />27 outubro - 2 n...<WeekBadge>Semana atual</WeekBadge></WeekHead>
      <Activity $ls={-0.05}>Treinamento PGR 011</Activity>
      <Activity $ls={-0.05}>Presença</Activity>
      <Activity $pad={12}><Ring />controle de presença</Activity>
      <Activity $ls={0.1}>teste de criação de novo video h...</Activity>
    </Week>
    <Week>
      <WeekHead><Chevron dir="down" />3 novembro - 9 novembro</WeekHead>
      <Activity $pad={12} $ls={-0.05}><Ring />Treinamento PGR</Activity>
      <Activity $pad={12} $ls={0.13}><Ring $gap={15} />TESTE DE CONTROLE DE PRESE...</Activity>
      <Activity $pad={12} $on $ls={0.03}><Ring $on />Avaliação Pós-Treinamento</Activity>
      <Activity $ls={-0.05}>Presença</Activity>
    </Week>
  </Drawer>
);

const Quiz = () => (
  <Main>
    <Column>
      <Crumbs>
        <a>ISO-9001-Basico</a><i>/</i><a>3 novembro - 9 novembro</a><i>/</i><span>Avaliação Pós-Treinamento</span>
      </Crumbs>
      <Heading>
        <Icon w={42} h={36}>
          <rect x="2.500" y="1.500" width="37" height="33" rx="4" stroke="#f7129a" strokeWidth="2.200" />
          <path d="M8.500 10.500h12M8.500 18h12M8.500 25.500h12" stroke="#f7129a" strokeWidth="2.400" strokeLinecap="round" />
          <path d="M27.500 8.500l4 4M31.500 8.500l-4 4M27 18l2 2 3.500-4M27 25.500l2 2 3.500-4" stroke="#f7129a" strokeWidth="2.100" />
        </Icon>
        <h1>Avaliação Pós-Treinamento</h1>
      </Heading>
      <TabBar>
        <PageTab $on>Questionário</PageTab>
        <PageTab>Configurações</PageTab>
        <PageTab>Questões</PageTab>
        <PageTab>Resultados</PageTab>
        <PageTab>Banco de questões</PageTab>
        <PageTab>Mais <Chevron dir="down" size={12} c={orange} sw={2.2} /></PageTab>
      </TabBar>
      <Card>
        <Conditions>
          <Pill $done><Icon w={11}><path d="M1.500 6l2.700 2.700L9.500 2.500" stroke="#fff" strokeWidth="1.800" /></Icon><b>Feito:</b> Ver</Pill>
          <Pill><b>A fazer:</b> Fazer tentativas: 1</Pill>
          <Pill><b>A fazer:</b> Receber uma nota</Pill>
          <Pill $ml={1}><b>A fazer:</b> Receber uma nota de aprovação</Pill>
        </Conditions>
        <Description>
          Após a conclusão do conteúdo, o colaborador deverá realizar uma prova avaliativa. A aprovação será<br />
          condicionada à obtenção de nota mínima 6, sendo permitidas até 3 tentativas. O certificado de participação só<br />
          deverá ser emitido após a aprovação na avaliação.
        </Description>
      </Card>
      <Primary>Ver prévia do questionário</Primary>
      <Fact $ls={-0.1}>Tentativas permitidas: 3</Fact>
      <Fact $ls={-0.03}>Duração máxima: 5 minutos</Fact>
      <Fact $ls={0.08}>Método de avaliação: Nota mais alta</Fact>
      <Fact $ls={0.06}>Nota para aprovação: 6,00 de 10,00</Fact>
      <Fact $link $ls={-0.12}>Tentativas: 3</Fact>
    </Column>
    <Help>?</Help>
  </Main>
);

export default function App() {
  return (
    <Screen>
      <Global />
      <Browser />
      <SiteNav>
        <Logo>
          <BrandMark />
          <span>-TRAINING</span>
        </Logo>
        <NavLinks>
          <span>Página inicial</span><span>Painel</span><span>Meus cursos</span><span>Administração do site</span>
        </NavLinks>
        <UserTools>
          <Bell><FaBell size={15} /><Count>1</Count></Bell>
          <Icon w={16}><path d="M2 1h12a2 2 0 0 1 2 2v8a2 2 0 0 1-2 2H9l-4 3v-3H2a2 2 0 0 1-2-2V3a2 2 0 0 1 2-2z" fill="#5a5a5a" /></Icon>
          <Avatar>MO</Avatar>
          <Chevron dir="down" size={12} c="#343a40" sw={1.8} />
          <EditMode>Modo de edição<Switch /></EditMode>
        </UserTools>
      </SiteNav>
      <Page>
        <Index />
        <Quiz />
      </Page>
      <Taskbar>
        <WidgetIcon />
        <StartArea>
          <StartIcon />
          <Search>
            <Icon w={16}><circle cx="7" cy="7" r="5.300" stroke="#e6e0e3" strokeWidth="1.700" /><path d="M11 11l4 4" stroke="#e6e0e3" strokeWidth="1.900" /></Icon>
            Pesquisar
          </Search>
          {apps.map((a, i) => {
            const Cell = a.active ? ActiveApp : App48;
            return <Cell key={i}>{a.icon}{a.badge}{a.run && <Running $on={a.active} />}</Cell>;
          })}
        </StartArea>
        <Tray>
          <Slot $w={30}><Icon w={12}><path d="M1.500 8.500L6 4l4.500 4.500" stroke="#fff" strokeWidth="1.500" /></Icon></Slot>
          <Slot $w={34}><Icon w={16} h={12}><path d="M4 11.500a3.800 3.800 0 0 1-.5-7.500A5 5 0 0 1 12.500 4a3.800 3.800 0 0 1-.3 7.500z" fill="#1c8df2" /><path d="M3 11c1-5 8-7 12.500-3.500a3.800 3.800 0 0 1-3.300 4H4z" fill="#2fb9ff" /></Icon></Slot>
          <TwoLines $w={43} $align="center">POR<br />PTB2</TwoLines>
          <Slot $w={32}><Icon w={16}><path d="M10 1.500H1v10.500h10.500V8M6 12v3M3 15h7M12 1h3v4.500h-3zM13.500 5.500V15" stroke="#fff" /></Icon></Slot>
          <Icon w={16}><path d="M1 6h2.500L7 3v10L3.500 10H1z" stroke="#fff" /><path d="M9 6c1 1 1 3 0 4M11 4c2 2 2 6 0 8M13 2.500c3 3 3 8 0 11" stroke="#fff" /></Icon>
          <TwoLines $w={80} $align="right">14:01<br />30/10/2025</TwoLines>
        </Tray>
      </Taskbar>
    </Screen>
  );
}
